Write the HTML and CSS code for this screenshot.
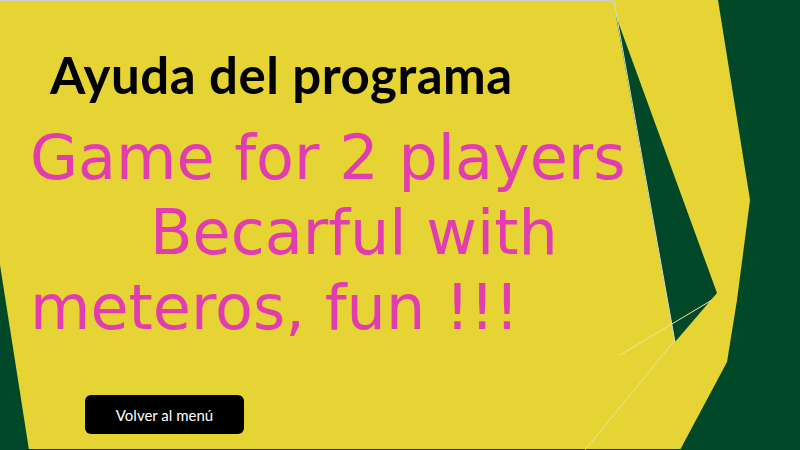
FILE: index.html
```html
<!DOCTYPE html>
<html lang="es">
<head>
<meta charset="utf-8">
<title>Ayuda del programa</title>
<link rel="stylesheet" href="styles.css">
</head>
<body>
<div class="screen">
  <svg class="bg" width="800" height="450" viewBox="0 0 800 450" aria-hidden="true">
    <rect x="0" y="0" width="800" height="450" fill="#e5d434"/>
    <polygon points="718,0 800,0 800,450 680,450 727,362 737,300 750,200 742,150" fill="#004828"/>
    <polygon points="616,16 717,293 675,342" fill="#004828"/>
    <polygon points="0,265 29,450 0,450" fill="#004828"/>
    <rect x="0" y="449" width="800" height="1" fill="#004828"/>
    <rect x="0" y="0" width="614" height="1" fill="#cfcfcf"/>
    <line x1="614" y1="1" x2="675" y2="342" stroke="#d8d8d8" stroke-width="1"/>
    <line x1="620" y1="355" x2="712" y2="300" stroke="#efe8a0" stroke-width="1"/>
    <line x1="585" y1="450" x2="675" y2="340" stroke="#ece395" stroke-width="1"/>
  </svg>
  <main class="content">
    <h1 class="title">Ayuda del programa</h1>
    <p class="message">
      <span class="line">Game for 2 players</span>
      <span class="line indent">Becarful with</span>
      <span class="line">meteros, fun !!!</span>
    </p>
    <button class="back" type="button">Volver al menú</button>
  </main>
</div>
</body>
</html>
```
FILE: styles.css
```css
html, body {
  margin: 0;
  padding: 0;
  background: #004828;
}
.screen {
  position: relative;
  width: 800px;
  height: 450px;
  overflow: hidden;
}
.bg {
  position: absolute;
  left: 0;
  top: 0;
  display: block;
}
.content {
  position: relative;
  display: flex;
  flex-direction: column;
  align-items: flex-start;
  padding: 0 0 0 30px;
  height: 450px;
  box-sizing: border-box;
}
.title {
  margin: 45px 0 0 20px;
  font-family: Lato, "Open Sans", sans-serif;
  font-weight: 700;
  font-size: 51px;
  line-height: 60px;
  color: #000;
  letter-spacing: 0.5px;
}
.message {
  margin: 15px 0 0 0;
  display: flex;
  flex-direction: column;
  font-family: "DejaVu Sans", sans-serif;
  font-size: 62px;
  line-height: 75px;
  color: #e13cb0;
}
.line {
  display: block;
  white-space: nowrap;
}
.indent {
  padding-left: 120px;
}
.back {
  margin: auto 0 16px 55px;
  width: 159px;
  height: 39px;
  border: none;
  border-radius: 6px;
  background: #000;
  color: #fff;
  font-family: Lato, "Open Sans", sans-serif;
  font-size: 15px;
  cursor: pointer;
}
```
